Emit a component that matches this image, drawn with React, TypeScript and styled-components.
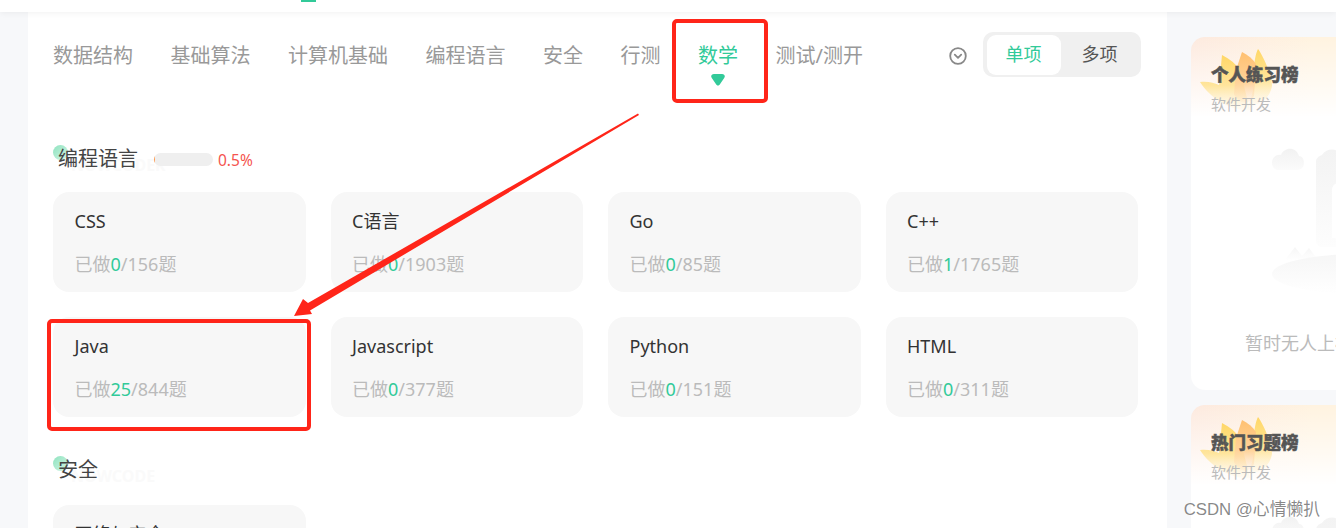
import React from 'react';
import styled, { createGlobalStyle } from 'styled-components';

const Global = createGlobalStyle`
  html, body { margin: 0; padding: 0; background: #f7f8fa; }
  #root { width: 1336px; height: 528px; overflow: hidden; position: relative; }
  * { box-sizing: border-box; }
`;

const Page = styled.div`
  width: 1336px;
  height: 528px;
  overflow: hidden;
  position: relative;
  background: #f7f8fa;
  font-family: "Noto Sans", "Noto Sans CJK SC", sans-serif;
`;

const Header = styled.header`
  height: 12px;
  background: #fff;
  box-shadow: 0 1px 6px rgba(0, 0, 0, 0.06);
  position: relative;
  z-index: 1;
`;

const HeaderIndicator = styled.div`
  width: 15px;
  height: 2px;
  margin-left: 301px;
  background: #32ca99;
`;

const Body = styled.div`
  display: flex;
  padding-left: 28px;
  height: 516px;
  overflow: hidden;
`;

const Main = styled.main`
  width: 1139px;
  flex: none;
  background: #fff;
  padding: 20px 26px 0 25px;
  position: relative;
`;

const TabsRow = styled.nav`
  display: flex;
  align-items: center;
  height: 45px;
  margin-bottom: 69px;
`;

const Tabs = styled.div`
  display: flex;
  gap: 37.5px;
  flex: 1;
  padding-top: 3px;
`;

const Tab = styled.div<{ $active?: boolean }>`
  position: relative;
  font-size: 20px;
  line-height: 28px;
  white-space: nowrap;
  color: ${p => (p.$active ? '#32ca99' : '#999')};
`;

const TabPointer = styled.svg`
  position: absolute;
  left: 12.5px;
  top: 32px;
  width: 14px;
  height: 12px;
`;

const ExpandIcon = styled.svg`
  width: 18px;
  height: 18px;
  margin: 2px 16px 0 0;
  flex: none;
`;

const Toggle = styled.div`
  display: flex;
  width: 158px;
  height: 45px;
  padding: 3px 4px 2px;
  border-radius: 10px;
  background: #f0f0f0;
`;

const ToggleItem = styled.div<{ $active?: boolean }>`
  width: 74px;
  height: 40px;
  border-radius: 9px;
  font-size: 18px;
  line-height: 38px;
  text-align: center;
  text-indent: -1px;
  background: ${p => (p.$active ? '#fff' : 'transparent')};
  color: ${p => (p.$active ? '#32ca99' : '#555')};
  & + & { margin-left: 2px; }
`;

const Section = styled.section`
  padding-right: 3px;
  margin-bottom: 40px;
`;

const SectionHead = styled.div<{ $gap: number }>`
  display: flex;
  align-items: center;
  height: 26px;
  margin-bottom: ${p => p.$gap}px;
  position: relative;
`;

const GhostWord = styled.span`
  position: absolute;
  left: 18px;
  top: 8px;
  font-size: 16px;
  line-height: 22px;
  font-weight: 700;
  color: #fafafa;
  white-space: nowrap;
`;

const SectionDot = styled.span`
  position: absolute;
  left: 0;
  top: -1px;
  width: 15px;
  height: 15px;
  border-radius: 50%;
  background: linear-gradient(135deg, #8fe3bf, #d3f5e6);
`;

const SectionTitle = styled.h2`
  position: relative;
  margin: 0 0 0 5px;
  font-size: 20px;
  font-weight: 400;
  line-height: 26px;
  color: #444;
`;

const Progress = styled.div`
  position: relative;
  width: 59px;
  height: 13px;
  margin: 1px 0 0 16px;
  border-radius: 7px;
  background: #efefef;
  overflow: hidden;
`;

const ProgressFill = styled.div`
  height: 100%;
  background: #ff9a4d;
`;

const Percent = styled.span`
  position: relative;
  margin: 1px 0 0 5px;
  font-size: 15.5px;
  color: #f5544f;
`;

const CardGrid = styled.div`
  display: grid;
  grid-template-columns: repeat(4, 1fr);
  gap: 25px;
`;

const Card = styled.div`
  height: 100px;
  padding: 16px 22px 0 21.5px;
  border-radius: 16px;
  background: #f7f7f7;
`;

const CardTitle = styled.div`
  font-size: 18px;
  line-height: 26px;
  color: #333;
`;

const CardStat = styled.div`
  margin-top: 17px;
  font-size: 18px;
  line-height: 26px;
  color: #bbb;
`;

const Done = styled.span`
  color: #32ca99;
`;

const Side = styled.aside`
  flex: none;
  width: 216px;
  margin-left: 24px;
  padding-top: 25px;
  display: flex;
  flex-direction: column;
  gap: 15px;
`;

const RankCard = styled.div`
  flex: none;
  height: 353px;
  padding: 0 0 0 20px;
  border-radius: 14px;
  position: relative;
  overflow: hidden;
  background:
    linear-gradient(180deg, rgba(255, 255, 255, 0) 0, #fff 80px),
    linear-gradient(90deg, #fdeadf, #fff3e0 120px);
`;

const RankFlame = styled.svg`
  position: absolute;
  left: 9px;
  top: 11px;
  width: 74px;
  height: 64px;
`;

const RankTitle = styled.div`
  position: relative;
  padding-top: 23px;
  font-size: 17.5px;
  font-weight: 900;
  line-height: 28px;
  color: #555;
  -webkit-text-stroke: 0.5px #555;
`;

const RankSub = styled.div`
  position: relative;
  margin-top: 6px;
  font-size: 15px;
  line-height: 20px;
  color: #bbb;
`;

const EmptyArt = styled.svg`
  display: block;
  width: 144px;
  height: 150px;
  margin: 34px 0 0 61px;
`;

const EmptyText = styled.div`
  margin: 32px 0 0 34px;
  font-size: 18px;
  line-height: 26px;
  color: #bbb;
  white-space: nowrap;
`;

const RedFrame = styled.div`
  position: absolute;
  border: 4px solid #ff2519;
  border-radius: 5px;
  z-index: 5;
`;

const TabFrame = styled(RedFrame)`
  left: 672px;
  top: 19px;
  width: 96px;
  height: 84px;
`;

const CardFrame = styled(RedFrame)`
  left: 47px;
  top: 319px;
  width: 264px;
  height: 112px;
`;

const ArrowLayer = styled.svg`
  position: absolute;
  left: 0;
  top: 0;
  width: 1336px;
  height: 528px;
  z-index: 6;
  pointer-events: none;
`;

const Watermark = styled.div`
  position: absolute;
  right: 16px;
  bottom: 8px;
  z-index: 7;
  font-family: "Liberation Sans", "Noto Sans CJK SC", sans-serif;
  font-size: 16.8px;
  line-height: 20px;
  color: rgba(90, 90, 90, 0.72);
  white-space: nowrap;
`;

const tabs = ['数据结构', '基础算法', '计算机基础', '编程语言', '安全', '行测', '数学', '测试/测开'];

const languages = [
  ['CSS', 0, 156],
  ['C语言', 0, 1903],
  ['Go', 0, 85],
  ['C++', 1, 1765],
  ['Java', 25, 844],
  ['Javascript', 0, 377],
  ['Python', 0, 151],
  ['HTML', 0, 311],
] as const;

const Flame = () => (
  <RankFlame viewBox="0 0 74 64">
    <defs>
      <linearGradient id="fy" x1="0" y1="0" x2="0" y2="1">
        <stop offset="0" stopColor="#ffd766" />
        <stop offset="0.55" stopColor="#ffe59c" />
        <stop offset="1" stopColor="#fff4d8" stopOpacity="0.2" />
      </linearGradient>
      <linearGradient id="fo" x1="0" y1="0" x2="0" y2="1">
        <stop offset="0" stopColor="#ffc070" />
        <stop offset="0.6" stopColor="#ffd39a" />
        <stop offset="1" stopColor="#ffe3c4" stopOpacity="0.2" />
      </linearGradient>
    </defs>
    <path d="M0 34 C8 33 14 35 19 37 L22 7 C30 11 36 16 40 22 L50 62 C32 64 10 50 0 34Z" fill="url(#fy)" />
    <path d="M54 18 C55 10 56 5 58 1 C62 6 72 26 72 38 C70 50 60 58 48 58 C54 44 56 30 54 18Z" fill="url(#fy)" />
    <path d="M36 22 L42 4 C48 7 53 11 56 16 L54 48 C50 58 38 56 34 46Z" fill="url(#fo)" />
  </RankFlame>
);

const Illustration = () => (
  <EmptyArt viewBox="0 0 144 150">
    <defs>
      <linearGradient id="cl" x1="0" y1="0" x2="0" y2="1">
        <stop offset="0" stopColor="#f2f2f2" />
        <stop offset="1" stopColor="#fbfbfb" />
      </linearGradient>
      <linearGradient id="tw" x1="0" y1="0" x2="0" y2="1">
        <stop offset="0" stopColor="#f3f3f3" />
        <stop offset="1" stopColor="#fdfdfd" />
      </linearGradient>
      <linearGradient id="gr" x1="0" y1="0" x2="0" y2="1">
        <stop offset="0" stopColor="#f6f6f6" />
        <stop offset="1" stopColor="#ffffff" />
      </linearGradient>
    </defs>
    <path d="M0 15 C0 9 5 6 9 7 C12 -1 24 -2 27 8 C30 8 32 11 32 15 C32 20 28 22 25 22 L6 22 C3 22 0 19 0 15Z" fill="url(#cl)" />
    <path d="M44 14 C44 10 47 8 50 7 C54 1 62 0 68 4 L144 4 L144 99 L50 99 C46 99 44 96 44 92Z" fill="url(#tw)" />
    <path d="M60 42 C60 38 63 35 67 35 L144 35 L144 90 L60 90Z" fill="#ffffff" />
    <path d="M13 112 L23 99 L30 108 L37 100 L46 112Z" fill="url(#gr)" />
    <ellipse cx="90" cy="126" rx="90" ry="20" fill="url(#gr)" />
  </EmptyArt>
);

const Rank = ({ title }: { title: string }) => (
  <RankCard>
    <Flame />
    <RankTitle>{title}</RankTitle>
    <RankSub>软件开发</RankSub>
    <Illustration />
    <EmptyText>暂时无人上榜</EmptyText>
  </RankCard>
);

export default function App() {
  return (
    <Page>
      <Global />
      <Header>
        <HeaderIndicator />
      </Header>
      <Body>
        <Main>
          <TabsRow>
            <Tabs>
              {tabs.map(t => (
                <Tab key={t} $active={t === '数学'}>
                  {t}
                  {t === '数学' && (
                    <TabPointer viewBox="0 0 14 12">
                      <path d="M3 0 H11 C13.5 0 14.6 2.2 13.2 4 L8.6 10.8 C7.7 11.9 6.3 11.9 5.4 10.8 L0.8 4 C-0.6 2.2 0.5 0 3 0Z" fill="#32ca99" />
                    </TabPointer>
                  )}
                </Tab>
              ))}
            </Tabs>
            <ExpandIcon viewBox="0 0 18 18" fill="none" stroke="#888" strokeWidth="1.8" strokeLinecap="round" strokeLinejoin="round">
              <circle cx="9" cy="9" r="7.8" />
              <path d="M5.8 7.6 L9 10.8 L12.2 7.6" />
            </ExpandIcon>
            <Toggle>
              <ToggleItem $active>单项</ToggleItem>
              <ToggleItem>多项</ToggleItem>
            </Toggle>
          </TabsRow>
          <Section>
            <SectionHead $gap={20}>
              <GhostWord>NOWCODER</GhostWord>
              <SectionDot />
              <SectionTitle>编程语言</SectionTitle>
              <Progress>
                <ProgressFill style={{ width: `${(0.5 / 100) * 59}px` }} />
              </Progress>
              <Percent>0.5%</Percent>
            </SectionHead>
            <CardGrid>
              {languages.map(([name, done, total]) => (
                <Card key={name}>
                  <CardTitle>{name}</CardTitle>
                  <CardStat>
                    已做<Done>{done}</Done>/{total}题
                  </CardStat>
                </Card>
              ))}
            </CardGrid>
          </Section>
          <Section>
            <SectionHead $gap={22}>
              <GhostWord>NOWCODE</GhostWord>
              <SectionDot />
              <SectionTitle>安全</SectionTitle>
            </SectionHead>
            <CardGrid>
              <Card>
                <CardTitle>网络与安全</CardTitle>
              </Card>
            </CardGrid>
          </Section>
        </Main>
        <Side>
          <Rank title="个人练习榜" />
          <Rank title="热门习题榜" />
        </Side>
      </Body>
      <TabFrame />
      <CardFrame />
      <ArrowLayer viewBox="0 0 1336 528">
        <path d="M638 113.5 L308 303 L303 299 L294 316 L312 314 L310 310.5 L639 115Z" fill="#ff2519" />
      </ArrowLayer>
      <Watermark>CSDN @心情懒扒</Watermark>
    </Page>
  );
}
